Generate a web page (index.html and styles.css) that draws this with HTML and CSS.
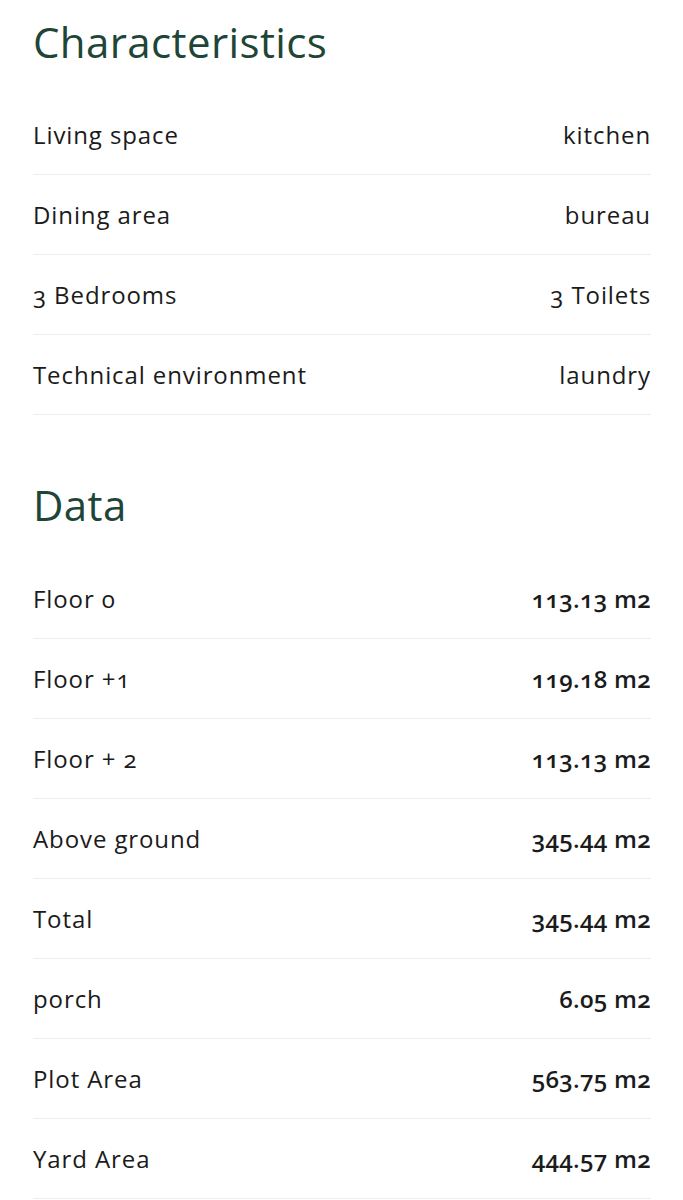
FILE: index.html
```html
<!DOCTYPE html>
<html lang="en">
<head>
<meta charset="utf-8">
<link rel="stylesheet" href="styles.css">
</head>
<body>
<main class="page">
  <section class="section">
    <h2 class="title">Characteristics</h2>
    <div class="list">
      <div class="row"><span class="label">Living space</span><span class="value">kitchen</span></div>
      <div class="row"><span class="label">Dining area</span><span class="value">bureau</span></div>
      <div class="row"><span class="label">3 Bedrooms</span><span class="value">3 Toilets</span></div>
      <div class="row"><span class="label">Technical environment</span><span class="value">laundry</span></div>
    </div>
  </section>
  <section class="section data">
    <h2 class="title">Data</h2>
    <div class="list">
      <div class="row"><span class="label">Floor 0</span><span class="value strong">113.13 m2</span></div>
      <div class="row"><span class="label">Floor +1</span><span class="value strong">119.18 m2</span></div>
      <div class="row"><span class="label">Floor + 2</span><span class="value strong">113.13 m2</span></div>
      <div class="row"><span class="label">Above ground</span><span class="value strong">345.44 m2</span></div>
      <div class="row"><span class="label">Total</span><span class="value strong">345.44 m2</span></div>
      <div class="row"><span class="label">porch</span><span class="value strong">6.05 m2</span></div>
      <div class="row"><span class="label">Plot Area</span><span class="value strong">563.75 m2</span></div>
      <div class="row"><span class="label">Yard Area</span><span class="value strong">444.57 m2</span></div>
    </div>
  </section>
</main>
</body>
</html>
```

FILE: styles.css
```css
html, body {
  margin: 0;
  padding: 0;
  background: #ffffff;
}
body {
  font-family: "Open Sans", "Liberation Sans", sans-serif;
  font-variant-numeric: oldstyle-nums;
  color: #1b1b1b;
}
.page {
  padding: 0 32px 0 33px;
}
.title {
  margin: 0;
  font-weight: 400;
  font-size: 42px;
  line-height: 84px;
  color: #1e4537;
  letter-spacing: 0.4px;
}
.section.data {
  margin-top: 42px;
}
.section.data .title {
  line-height: 96px;
  margin-top: 0;
}
.list {
  display: flex;
  flex-direction: column;
}
.row {
  display: flex;
  justify-content: space-between;
  align-items: center;
  height: 79px;
  border-bottom: 1px solid #eeeeee;
  font-size: 24px;
  letter-spacing: 0.9px;
}
.section:first-child .list {
  margin-top: 11px;
}
.section.data .list {
  margin-top: 6px;
}
.value.strong {
  font-weight: 600;
  letter-spacing: 0.3px;
}
```
